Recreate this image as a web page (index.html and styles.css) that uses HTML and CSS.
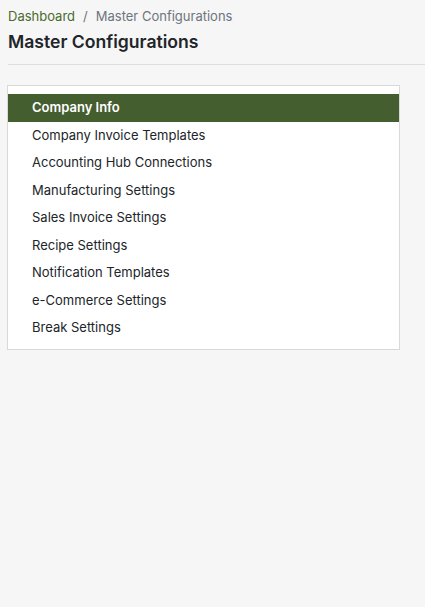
FILE: index.html
```html
<!DOCTYPE html>
<html>
<head>
<meta charset="utf-8">
<link rel="stylesheet" href="styles.css">
</head>
<body>
<div class="page">
  <nav class="breadcrumb">
    <a class="crumb-link">Dashboard</a>
    <span class="sep">/</span>
    <span class="crumb-current">Master Configurations</span>
  </nav>
  <h1 class="title">Master Configurations</h1>
  <hr class="divider">
  <div class="card">
    <ul class="menu">
      <li class="item active">Company Info</li>
      <li class="item">Company Invoice Templates</li>
      <li class="item">Accounting Hub Connections</li>
      <li class="item">Manufacturing Settings</li>
      <li class="item">Sales Invoice Settings</li>
      <li class="item">Recipe Settings</li>
      <li class="item">Notification Templates</li>
      <li class="item">e-Commerce Settings</li>
      <li class="item">Break Settings</li>
    </ul>
  </div>
</div>
</body>
</html>
```

FILE: styles.css
```css
* { box-sizing: border-box; }
html, body {
  margin: 0;
  padding: 0;
  background: #f6f6f6;
  font-family: Inter, "Noto Sans", sans-serif;
  color: #212529;
}
.page {
  padding: 6px 0 0 8px;
}
.breadcrumb {
  font-size: 13px;
  line-height: 20px;
  display: flex;
  gap: 8px;
}
.crumb-link { color: #4a6a2c; }
.sep { color: #6c757d; }
.crumb-current { color: #6c757d; }
.title {
  margin: 3px 0 0 0;
  font-size: 17.6px;
  font-weight: 600;
  line-height: 26px;
  color: #212529;
}
.divider {
  margin: 9px 0 0 0;
  border: 0;
  border-top: 1px solid #dedede;
}
.card {
  margin-top: 20px;
  margin-left: -1px;
  width: 393px;
  background: #fff;
  border: 1px solid #d9d9d9;
  padding: 8px 0 7px 0;
}
.menu {
  list-style: none;
  margin: 0;
  padding: 0;
}
.item {
  font-size: 13px;
  line-height: 27.5px;
  padding-left: 24px;
  color: #212529;
}
.item.active {
  background: #455e30;
  color: #fff;
  font-weight: 600;
}
```
